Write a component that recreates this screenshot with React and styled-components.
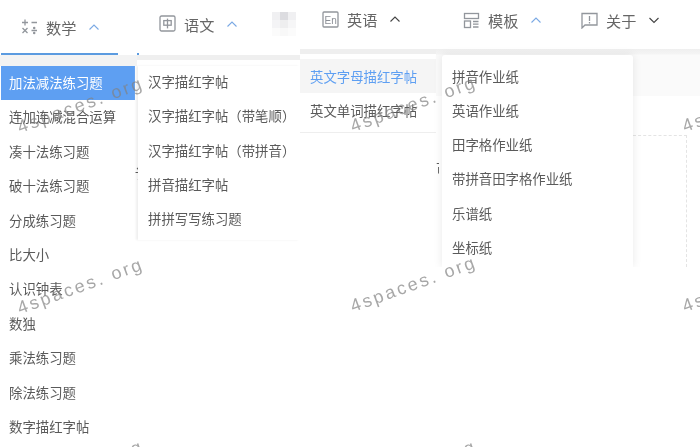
import React from "react";
import styled, { createGlobalStyle } from "styled-components";

const Global = createGlobalStyle`
  html, body { margin: 0; padding: 0; background: #fff; }
  * { box-sizing: border-box; }
`;

const Page = styled.div`
  position: relative;
  display: flex;
  width: 700px;
  height: 447px;
  overflow: hidden;
  background: #fff;
  color: #5a5a5a;
  font-family: "Noto Sans CJK SC", "Liberation Sans", sans-serif;
  font-size: 13.4px;
  filter: blur(0.25px);
`;

const Column = styled.section`
  flex: none;
  width: ${(p) => p.$width}px;
`;

const Tab = styled.div`
  display: flex;
  align-items: center;
  width: ${(p) => p.$width || "auto"};
  height: ${(p) => p.$height}px;
  padding-left: ${(p) => p.$left}px;
  padding-bottom: ${(p) => p.$bottom || 0}px;
  color: #666;
  font-size: 15.2px;
`;

const TabLabel = styled.span`
  margin: 0 12px 0 8px;
  line-height: 20px;
`;

const Underline = styled.div`
  width: 117px;
  height: 2px;
  margin-left: 1px;
  background: #5b9be0;
`;

const ActiveDot = styled.div`
  width: 2px;
  height: 2px;
  background: #5b9be0;
`;

const Band = styled.div`
  height: ${(p) => p.$height}px;
  margin-bottom: ${(p) => p.$gap || 0}px;
  background: ${(p) => p.$color || "#efefef"};
`;

const MathMenu = styled.ul`
  list-style: none;
  margin: 0;
  padding: 0 0 0 1px;
`;

const MathItem = styled.li`
  height: 34.4px;
  line-height: 32px;
  padding-left: 8px;
  width: 134px;
  white-space: nowrap;
  background: ${(p) => (p.$active ? "#5e9ff2" : "transparent")};
  color: ${(p) => (p.$active ? "#fff" : "#5a5a5a")};
`;

const ChineseMenu = styled.ul`
  list-style: none;
  margin: 0 0 0 1px;
  padding: 0 0 3px;
  height: 174px;
  box-shadow: -2px 0 2px #efefef;
`;

const ChineseItem = styled.li`
  height: 34.3px;
  line-height: 30px;
  padding-left: 10px;
  white-space: nowrap;
`;

const EnglishMenu = styled.ul`
  list-style: none;
  margin: 0;
  padding: 0;
  height: 74px;
  border-bottom: 1px solid #eee;
`;

const EnglishItem = styled.li`
  height: ${(p) => (p.$active ? 34 : 40)}px;
  line-height: 34px;
  padding-left: 10px;
  white-space: nowrap;
  background: ${(p) => (p.$active ? "#f5f5f5" : "transparent")};
  color: ${(p) => (p.$active ? "#5e9ff2" : "#5a5a5a")};
`;

const TabRow = styled.div`
  display: flex;
  height: 49px;
`;

const Workspace = styled.div`
  display: flex;
  height: 218px;
  padding-left: 6px;
  background: linear-gradient(#efefef 0, #f4f4f4 5px, #fafafa 6px, #fafafa 47px, #fff 47px);
`;

const Dropdown = styled.ul`
  flex: none;
  list-style: none;
  width: 191px;
  height: 212px;
  margin: 6px 0 0;
  padding: 3.5px 0 0;
  background: #fff;
  border-radius: 3px 3px 0 0;
  box-shadow: 0 0 10px rgba(0, 0, 0, 0.09);
  clip-path: inset(-12px -12px 0 -12px);
`;

const DropdownItem = styled.li`
  height: 34.3px;
  line-height: 34px;
  padding-left: 10px;
  white-space: nowrap;
`;

const SheetEdge = styled.div`
  width: 54px;
  height: 132px;
  margin-top: 86px;
  border-top: 1px dashed #e4e4e4;
  border-right: 1px dashed #e4e4e4;
`;

const Watermark = styled.span`
  position: absolute;
  left: ${(p) => p.$x}px;
  top: ${(p) => p.$y}px;
  font-family: "Liberation Sans", sans-serif;
  font-size: 18px;
  letter-spacing: 2.5px;
  line-height: 24px;
  white-space: nowrap;
  color: rgba(130, 130, 130, 0.7);
  transform: rotate(-20deg);
  transform-origin: left bottom;
`;

const Fragment = styled.span`
  position: absolute;
  left: ${(p) => p.$x}px;
  top: ${(p) => p.$y}px;
  width: 3px;
  overflow: hidden;
  line-height: 16px;
  font-size: 13.4px;
`;

const Icon = styled.svg`
  flex: none;
  width: 17px;
  height: 17px;
  fill: none;
  stroke: #92969c;
  stroke-width: 1.3;
`;

const Chevron = styled.svg`
  flex: none;
  width: 12px;
  height: 8px;
  fill: none;
  stroke: ${(p) => (p.$tone === "blue" ? "#7aa9e4" : "#444")};
  stroke-width: 1.1;
`;

const MathIcon = () => (
  <Icon viewBox="0 0 17 17">
    <path d="M1 4.500h6M4 1.500v6M10.500 4.500h5.500M1.500 10l5 5M6.500 10l-5 5M10.500 12.500h5.500" />
    <circle cx="13.200" cy="10" r=".6" />
    <circle cx="13.200" cy="15" r=".6" />
  </Icon>
);

const ZhIcon = () => (
  <Icon viewBox="0 0 17 17">
    <rect x="1" y="1" width="15" height="15" rx="1.500" />
    <rect x="4.800" y="5.600" width="7.400" height="4.600" />
    <path d="M8.500 3.600v9.800" />
  </Icon>
);

const EnGlyph = styled.text`
  font-family: "Liberation Sans", sans-serif;
  font-size: 10px;
  fill: #8b8f96;
  stroke: none;
`;

const EnIcon = () => (
  <Icon viewBox="0 0 17 17">
    <rect x="1" y="1" width="15" height="15" rx="1" />
    <EnGlyph x="2.500" y="12.500">En</EnGlyph>
  </Icon>
);

const TemplateIcon = () => (
  <Icon viewBox="0 0 17 17">
    <rect x="1.500" y="1.500" width="14" height="5" />
    <rect x="1.500" y="9" width="6" height="6.500" />
    <path d="M10 9.500h5.500M10 12.200h5.500M10 15h5.500" />
  </Icon>
);

const AboutIcon = () => (
  <Icon viewBox="0 0 17 17">
    <path d="M1 1.500h15v11.500H4L1 16z" />
    <path d="M8.500 4v5M8.500 10v1.400" />
  </Icon>
);

const Caret = ({ tone, down }) => (
  <Chevron viewBox="0 0 12 8" $tone={tone}>
    <path d={down ? "M1.500 2l4.500 4.500L10.500 2" : "M1.500 6.500L6 2l4.500 4.500"} />
  </Chevron>
);

const MosaicBox = styled.svg`
  flex: none;
  width: 30px;
  height: 24px;
  margin-left: 31px;
`;

const Mosaic = () => (
  <MosaicBox viewBox="0 0 3 3" shapeRendering="crispEdges">
    <rect x="0" y="0" width="1" height="1" fill="#f0f0f2" />
    <rect x="1" y="0" width="1" height="1" fill="#dcdce0" />
    <rect x="2" y="0" width="1" height="1" fill="#f0f0f2" />
    <rect x="0" y="1" width="1" height="1" fill="#f4f4f6" />
    <rect x="1" y="1" width="1" height="1" fill="#eeeeef" />
    <rect x="2" y="1" width="1" height="1" fill="#f6f6f7" />
    <rect x="0" y="2" width="1" height="1" fill="#fbfbfb" />
    <rect x="1" y="2" width="1" height="1" fill="#f8f8f8" />
    <rect x="2" y="2" width="1" height="1" fill="#fbfbfb" />
  </MosaicBox>
);

const mathItems = ["加法减法练习题", "连加连减混合运算", "凑十法练习题", "破十法练习题", "分成练习题", "比大小", "认识钟表", "数独", "乘法练习题", "除法练习题", "数字描红字帖"];
const chineseItems = ["汉字描红字帖", "汉字描红字帖（带笔顺）", "汉字描红字帖（带拼音）", "拼音描红字帖", "拼拼写写练习题"];
const englishItems = ["英文字母描红字帖", "英文单词描红字帖"];
const paperItems = ["拼音作业纸", "英语作业纸", "田字格作业纸", "带拼音田字格作业纸", "乐谱纸", "坐标纸"];
const marks = [[22, 115], [22, 296], [355, 114], [355, 294], [687, 114], [687, 294], [22, 478], [355, 478]];

export default function App() {
  return (
    <Page>
      <Global />
      <Column $width={137}>
        <Tab $height={53} $left={21} $bottom={-1}>
          <MathIcon />
          <TabLabel>数学</TabLabel>
          <Caret tone="blue" />
        </Tab>
        <Underline />
        <Band $height={11} $color="#f3f3f3" />
        <MathMenu>
          {mathItems.map((t, i) => (
            <MathItem key={t} $active={i === 0}>{t}</MathItem>
          ))}
        </MathMenu>
      </Column>
      <Column $width={163}>
        <Tab $height={53} $left={22} $bottom={6}>
          <ZhIcon />
          <TabLabel>语文</TabLabel>
          <Caret tone="blue" />
          <Mosaic />
        </Tab>
        <ActiveDot />
        <Band $height={5} $gap={6} />
        <ChineseMenu>
          {chineseItems.map((t) => (
            <ChineseItem key={t}>{t}</ChineseItem>
          ))}
        </ChineseMenu>
      </Column>
      <Column $width={136}>
        <Tab $height={49} $left={22} $bottom={11}>
          <EnIcon />
          <TabLabel>英语</TabLabel>
          <Caret />
        </Tab>
        <Band $height={5} $gap={5} />
        <EnglishMenu>
          {englishItems.map((t, i) => (
            <EnglishItem key={t} $active={i === 0}>{t}</EnglishItem>
          ))}
        </EnglishMenu>
      </Column>
      <Column $width={264}>
        <TabRow>
          <Tab $height={49} $left={27} $width="145px" $bottom={9}>
            <TemplateIcon />
            <TabLabel>模板</TabLabel>
            <Caret tone="blue" />
          </Tab>
          <Tab $height={49} $left={0} $bottom={9}>
            <AboutIcon />
            <TabLabel>关于</TabLabel>
            <Caret down />
          </Tab>
        </TabRow>
        <Workspace>
          <Dropdown>
            {paperItems.map((t) => (
              <DropdownItem key={t}>{t}</DropdownItem>
            ))}
          </Dropdown>
          <SheetEdge />
        </Workspace>
      </Column>
      {marks.map(([x, y]) => (
        <Watermark key={`${x}-${y}`} $x={x} $y={y}>4spaces. org</Watermark>
      ))}
      <Fragment $x={135} $y={165}>讠</Fragment>
      <Fragment $x={436} $y={160}>可</Fragment>
    </Page>
  );
}
